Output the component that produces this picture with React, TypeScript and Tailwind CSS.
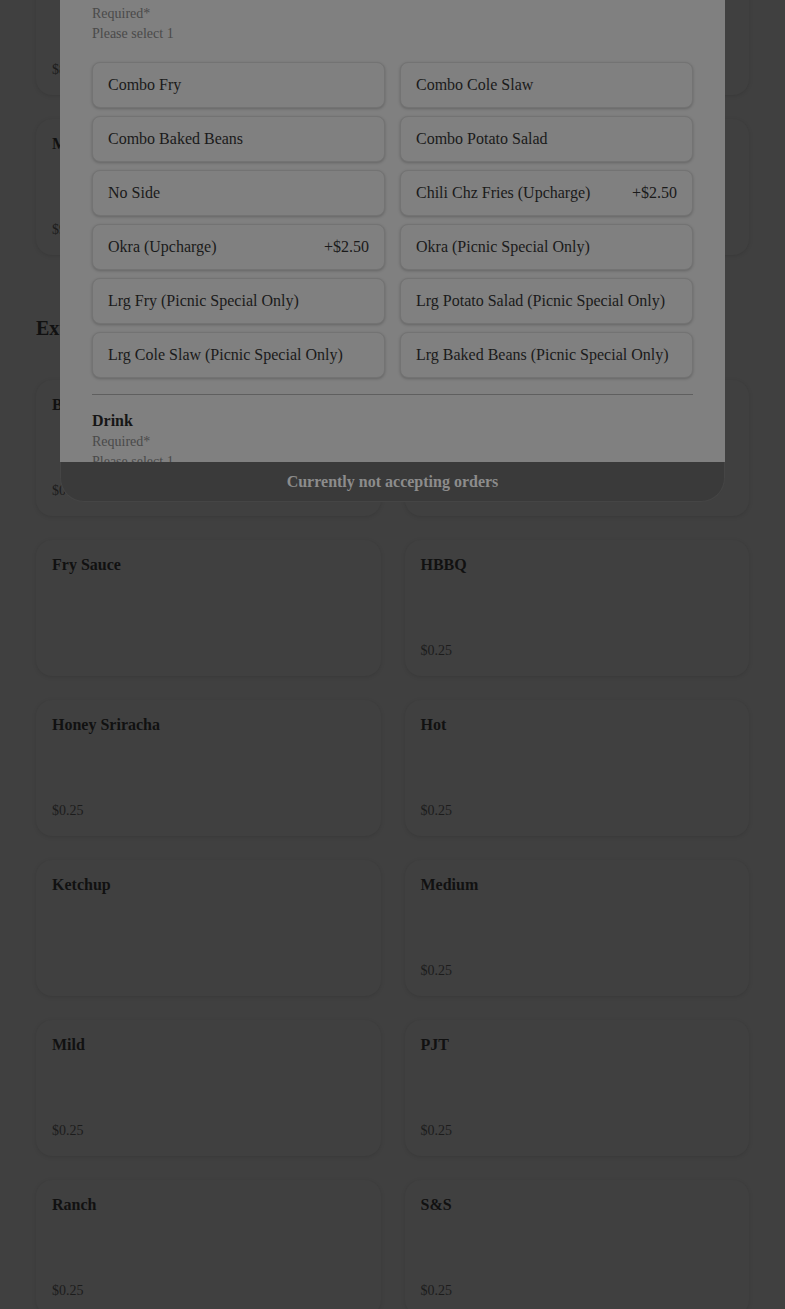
import React from 'react';

type Item = { name: string; price?: string };

const topItems: Item[] = [
  { name: 'Lunch Special', price: '$8.99' },
  { name: 'Picnic Special', price: '$24.99' },
  { name: 'Meal Deal', price: '$9.49' },
  { name: 'Kids Meal', price: '$5.99' },
];

const sauces: Item[] = [
  { name: 'BBQ', price: '$0.25' },
  { name: 'Buffalo', price: '$0.25' },
  { name: 'Fry Sauce' },
  { name: 'HBBQ', price: '$0.25' },
  { name: 'Honey Sriracha', price: '$0.25' },
  { name: 'Hot', price: '$0.25' },
  { name: 'Ketchup' },
  { name: 'Medium', price: '$0.25' },
  { name: 'Mild', price: '$0.25' },
  { name: 'PJT', price: '$0.25' },
  { name: 'Ranch', price: '$0.25' },
  { name: 'S&S', price: '$0.25' },
];

const sides: Item[] = [
  { name: 'Combo Fry' },
  { name: 'Combo Cole Slaw' },
  { name: 'Combo Baked Beans' },
  { name: 'Combo Potato Salad' },
  { name: 'No Side' },
  { name: 'Chili Chz Fries (Upcharge)', price: '+$2.50' },
  { name: 'Okra (Upcharge)', price: '+$2.50' },
  { name: 'Okra (Picnic Special Only)' },
  { name: 'Lrg Fry (Picnic Special Only)' },
  { name: 'Lrg Potato Salad (Picnic Special Only)' },
  { name: 'Lrg Cole Slaw (Picnic Special Only)' },
  { name: 'Lrg Baked Beans (Picnic Special Only)' },
];

const MenuCard = ({ item }: { item: Item }) => (
  <div className="h-[136px] rounded-2xl bg-[#404040] shadow-[0_1px_4px_rgba(0,0,0,0.12)] px-4 pt-[15px] pb-[15px] flex flex-col justify-between">
    <h3 className="text-base leading-5 font-bold text-[#111]">{item.name}</h3>
    <span className="text-sm leading-5 text-[#1c1c1c]">{item.price ?? ''}</span>
  </div>
);

const GroupHeader = ({ title }: { title: string }) => (
  <div>
    <h4 className="text-base leading-5 font-bold text-[#161616] mb-px">{title}</h4>
    <p className="text-sm leading-5 text-[#4a4a4a]">Required*</p>
    <p className="text-sm leading-5 text-[#4a4a4a]">Please select 1</p>
  </div>
);

export default function App() {
  return (
    <div className="relative h-[1309px] overflow-hidden bg-[#404040] font-['Liberation_Serif',serif]">
      {/* page behind the modal */}
      <div className="px-9">
        <div className="grid grid-cols-2 gap-6 -mt-[41px]">
          {topItems.map((it, i) => (
            <MenuCard key={i} item={it} />
          ))}
        </div>
        <h2 className="mt-[59px] mb-[38px] text-xl leading-7 font-bold text-[#111]">Extra Sauces</h2>
        <div className="grid grid-cols-2 gap-6">
          {sauces.map((it, i) => (
            <MenuCard key={i} item={it} />
          ))}
        </div>
      </div>

      {/* item options modal */}
      <div className="absolute left-[60px] top-0 w-[665px] h-[502px] flex flex-col">
        <div className="flex-1 overflow-hidden bg-[#808080] px-8">
          <div className="-mt-[17px]">
            <GroupHeader title="Side" />
            <div className="mt-[18px] grid grid-cols-2 gap-x-[15px] gap-y-2">
              {sides.map((s, i) => (
                <button
                  key={i}
                  className="h-[46px] rounded-lg border border-[#737373] bg-[#808080] shadow-[0_1px_3px_rgba(0,0,0,0.22)] px-[15px] flex items-center justify-between text-base text-[#1a1a1a] text-left"
                >
                  <span>{s.name}</span>
                  {s.price && <span>{s.price}</span>}
                </button>
              ))}
            </div>
            <div className="mt-4 border-t border-[#5f5f5f]" />
            <div className="mt-4">
              <GroupHeader title="Drink" />
            </div>
          </div>
        </div>
        <div className="h-10 shrink-0 rounded-b-3xl bg-[#3a3a3a] border border-t-0 border-[#454545] flex items-center justify-center">
          <span className="text-base font-bold text-[#8c8c8c]">Currently not accepting orders</span>
        </div>
      </div>
    </div>
  );
}
